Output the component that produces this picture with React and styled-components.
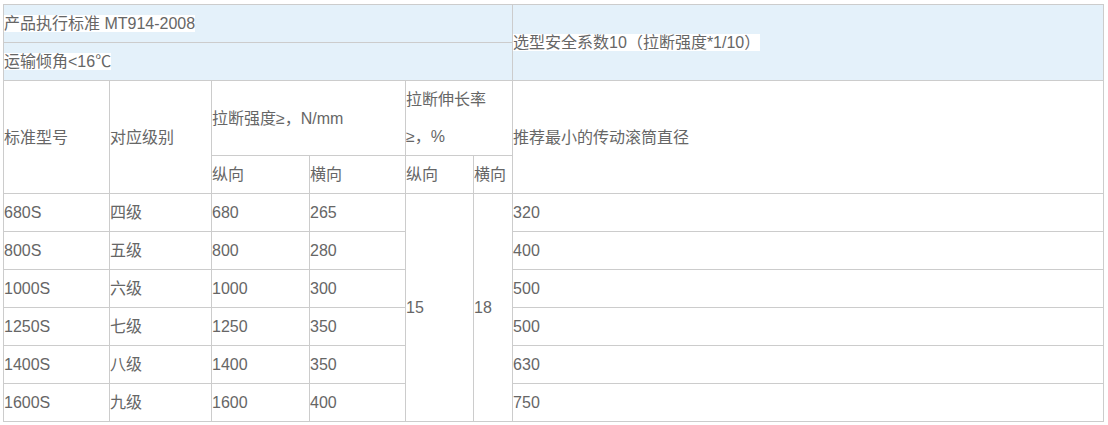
import React from "react";
import styled, { createGlobalStyle } from "styled-components";

const GlobalStyle = createGlobalStyle`
    html, body {
        margin: 0;
        padding: 0;
        background: #fff;
    }
`;

const Page = styled.div`
    padding: 4px 0 0 3px;
`;

const Table = styled.table`
    border-collapse: collapse;
    table-layout: fixed;
    width: 1100px;
    font-family: "Liberation Sans", "Noto Sans CJK SC", sans-serif;
    font-size: 16px;
    color: #666;
`;

const Cell = styled.td`
    border: 1px solid #ccc;
    padding: 0;
    line-height: 37px;
    vertical-align: middle;
    text-align: left;
    white-space: nowrap;
    overflow: hidden;
    background: ${(p) => (p.$shaded ? "#e4f1fa" : "#fff")};
`;

const Mark = styled.span`
    background: #fff;
`;

const rows = [
    ["680S", "四级", "680", "265", "320"],
    ["800S", "五级", "800", "280", "400"],
    ["1000S", "六级", "1000", "300", "500"],
    ["1250S", "七级", "1250", "350", "500"],
    ["1400S", "八级", "1400", "350", "630"],
    ["1600S", "九级", "1600", "400", "750"],
];

const widths = [106, 102, 98, 96, 68, 39, 591];

export default function App() {
    return (
        <Page>
            <GlobalStyle />
            <Table>
                <colgroup>
                    {widths.map((w, i) => (
                        <col key={i} style={{ width: w }} />
                    ))}
                </colgroup>
                <tbody>
                    <tr>
                        <Cell $shaded colSpan={6}>
                            <Mark>产品执行标准 MT914-2008</Mark>
                        </Cell>
                        <Cell $shaded rowSpan={2}>
                            <Mark>选型安全系数10（拉断强度*1/10）</Mark>
                        </Cell>
                    </tr>
                    <tr>
                        <Cell $shaded colSpan={6}>
                            <Mark>运输倾角&lt;16℃</Mark>
                        </Cell>
                    </tr>
                    <tr>
                        <Cell rowSpan={2}>标准型号</Cell>
                        <Cell rowSpan={2}>对应级别</Cell>
                        <Cell colSpan={2}>拉断强度≥，N/mm</Cell>
                        <Cell colSpan={2}>
                            拉断伸长率
                            <br />
                            ≥，%
                        </Cell>
                        <Cell rowSpan={2}>推荐最小的传动滚筒直径</Cell>
                    </tr>
                    <tr>
                        <Cell>纵向</Cell>
                        <Cell>横向</Cell>
                        <Cell>纵向</Cell>
                        <Cell>横向</Cell>
                    </tr>
                    {rows.map((r, i) => (
                        <tr key={r[0]}>
                            <Cell>{r[0]}</Cell>
                            <Cell>{r[1]}</Cell>
                            <Cell>{r[2]}</Cell>
                            <Cell>{r[3]}</Cell>
                            {i === 0 && (
                                <>
                                    <Cell rowSpan={6}>15</Cell>
                                    <Cell rowSpan={6}>18</Cell>
                                </>
                            )}
                            <Cell>{r[4]}</Cell>
                        </tr>
                    ))}
                </tbody>
            </Table>
        </Page>
    );
}
